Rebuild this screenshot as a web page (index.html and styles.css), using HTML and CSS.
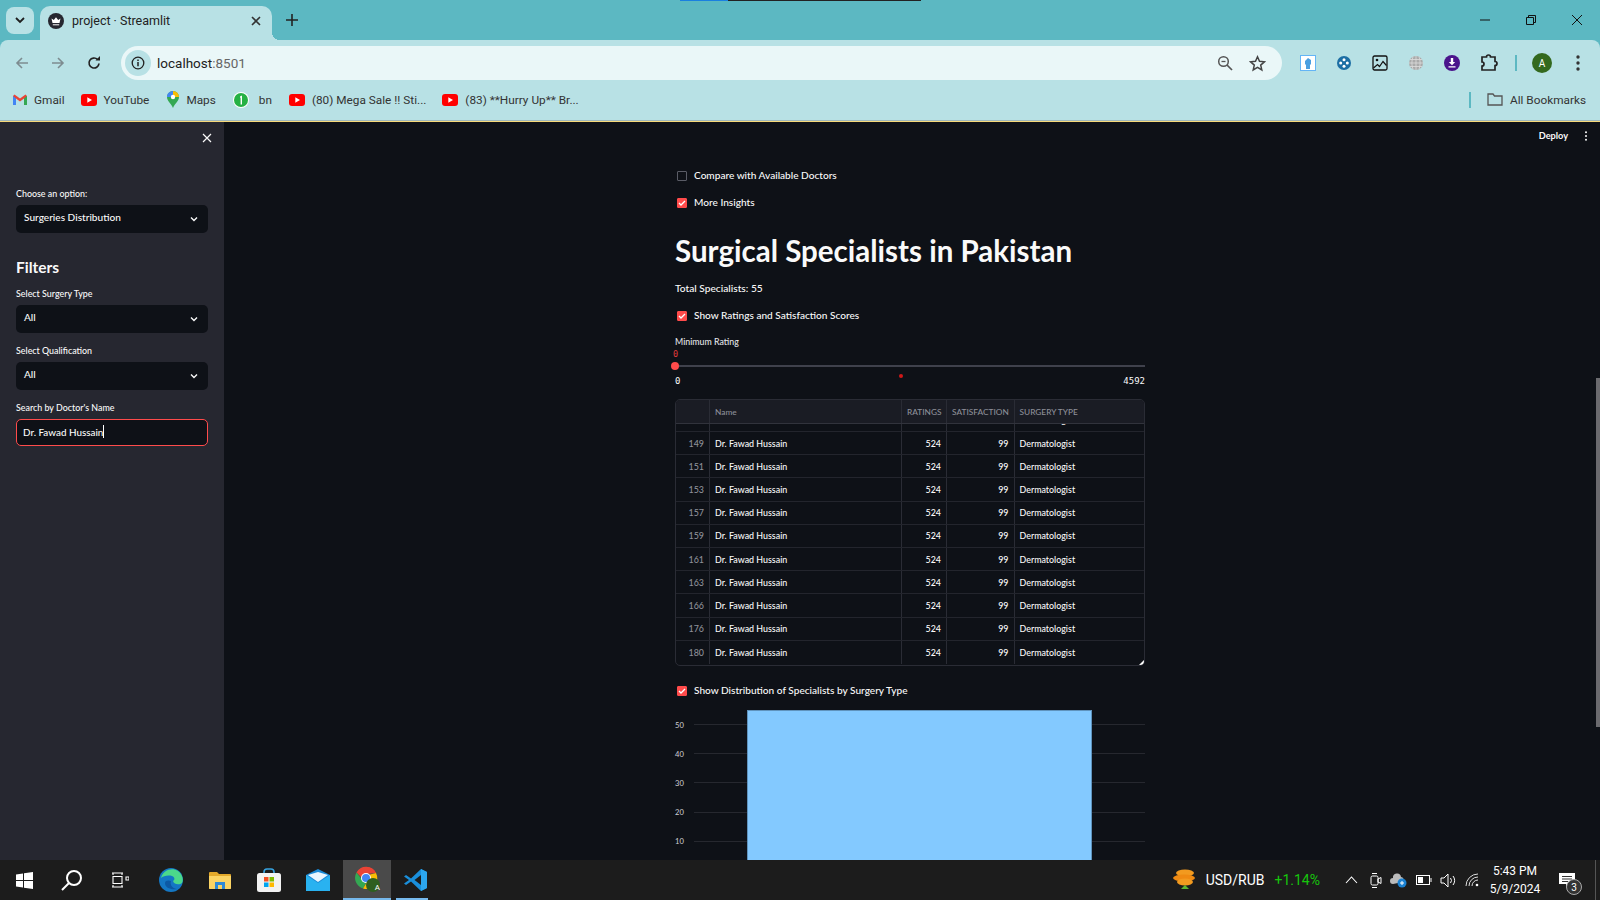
FILE: index.html
```html
<!DOCTYPE html>
<html>
<head>
	<title>project · Streamlit</title>
	<meta charset="utf-8">
	<link rel="stylesheet" href="styles.css">
</head>
<body>

	<div class="browser">
		<div class="tabstrip">
			<div class="tabsearch">
				<svg width="12" height="12" viewBox="0 0 12 12"><path d="M2 4l4 4 4-4" fill="none" stroke="#1f1f1f" stroke-width="1.8"/></svg>
			</div>
			<div class="tab">
				<svg class="favicon" width="16" height="16" viewBox="0 0 16 16"><circle cx="8" cy="8" r="8" fill="#262730"/><path d="M3.5 5.5l2.3 1.6L8 4.2l2.2 2.900 2.300-1.600-1 4.500h-7z" fill="#fff"/><path d="M4.800 11.300h6.400v1h-6.400z" fill="#fff"/></svg>
				<span class="tab_title">project · Streamlit</span>
				<svg class="tab_close" width="10" height="10" viewBox="0 0 10 10"><path d="M1 1l8 8M9 1l-8 8" stroke="#333" stroke-width="1.6"/></svg>
			</div>
			<svg class="newtab" width="12" height="12" viewBox="0 0 12 12"><path d="M6 0v12M0 6h12" stroke="#222" stroke-width="1.6"/></svg>
			<div class="wincontrols">
				<svg width="12" height="12" viewBox="0 0 12 12"><path d="M1 6h10" stroke="#111" stroke-width="1"/></svg>
				<svg width="12" height="12" viewBox="0 0 12 12"><path d="M1.5 3.5h7v7h-7zM3.5 3.5v-2h7v7h-2" fill="none" stroke="#111" stroke-width="1"/></svg>
				<svg width="12" height="12" viewBox="0 0 12 12"><path d="M1 1l10 10M11 1L1 11" stroke="#111" stroke-width="1"/></svg>
			</div>
		</div>

		<div class="toolbar">
			<div class="navbuttons">
				<svg width="16" height="16" viewBox="0 0 16 16"><path d="M14 8H3M8 3L3 8l5 5" fill="none" stroke="#7d8c90" stroke-width="1.6"/></svg>
				<svg width="16" height="16" viewBox="0 0 16 16"><path d="M2 8h11M8 3l5 5-5 5" fill="none" stroke="#7d8c90" stroke-width="1.6"/></svg>
				<svg width="16" height="16" viewBox="0 0 16 16"><path d="M13 8.500A5 5 0 1 1 11.500 4.400" fill="none" stroke="#222" stroke-width="1.7"/><path d="M9.500 5.500H14V1z" fill="#222"/></svg>
			</div>
			<div class="omnibox">
				<div class="siteinfo">
					<svg width="14" height="14" viewBox="0 0 14 14"><circle cx="7" cy="7" r="5.800" fill="none" stroke="#222" stroke-width="1.300"/><path d="M7 6v4.300M7 3.500v1.500" stroke="#222" stroke-width="1.500"/></svg>
				</div>
				<span class="url">localhost<span class="url_port">:8501</span></span>
				<svg class="omni_zoom" width="16" height="16" viewBox="0 0 16 16"><circle cx="6.500" cy="6.500" r="4.800" fill="none" stroke="#555" stroke-width="1.500"/><path d="M10 10l5 5" stroke="#555" stroke-width="1.700"/><path d="M4.500 6.500h4" stroke="#555" stroke-width="1.300"/></svg>
				<svg class="omni_star" width="17" height="17" viewBox="0 0 17 17"><path d="M8.500 1.800l2 4.500 4.900.5-3.700 3.300 1.100 4.800-4.300-2.500-4.300 2.500 1.100-4.800L1.600 6.800l4.900-.5z" fill="none" stroke="#444" stroke-width="1.500"/></svg>
			</div>
			<div class="extensions">
				<svg width="16" height="16" viewBox="0 0 16 16"><rect x=".5" y=".5" width="15" height="15" fill="#fff" stroke="#64b5f6"/><path d="M5 6l3-3 3 2v4l-1 1v4H6v-4L5 9z" fill="#4a9fe0"/></svg>
				<svg width="16" height="16" viewBox="0 0 16 16"><circle cx="8" cy="8" r="7" fill="#1c6ea4"/><circle cx="8" cy="4.700" r="1.500" fill="#fff"/><circle cx="8" cy="11.300" r="1.500" fill="#fff"/><circle cx="4.700" cy="8" r="1.500" fill="#fff"/><circle cx="11.300" cy="8" r="1.500" fill="#fff"/></svg>
				<svg width="16" height="16" viewBox="0 0 16 16"><rect x="1" y="1" width="14" height="14" rx="1.500" fill="none" stroke="#111" stroke-width="1.300"/><circle cx="5" cy="5" r="1.300" fill="#111"/><path d="M1.500 13l4-3.500 2 2 3.500-5 3.500 4" fill="none" stroke="#111" stroke-width="1.200"/></svg>
				<svg width="16" height="16" viewBox="0 0 16 16"><circle cx="8" cy="8" r="7" fill="#aaa"/><path d="M1 8h14M8 1v14M2 4.500h12M2 11.500h12M5 1.700c-1.500 4-1.500 8.600 0 12.600M11 1.700c1.500 4 1.500 8.600 0 12.600" fill="none" stroke="#ddd" stroke-width=".8"/></svg>
				<svg width="16" height="16" viewBox="0 0 16 16"><circle cx="8" cy="8" r="8" fill="#4a148c"/><path d="M6.800 3h2.400v4h2L8 10.300 4.800 7h2zM4.500 11.300h7v1.200h-7z" fill="#fff"/></svg>
				<svg width="18" height="18" viewBox="0 0 18 18"><path d="M2 3h4.500a2 2 0 0 1 4 0H15v4.500a2 2 0 0 1 0 4V16H2v-4a2 2 0 0 0 0-4z" fill="none" stroke="#222" stroke-width="1.700"/></svg>
				<div class="toolbar_sep"></div>
				<div class="avatar">A</div>
				<svg class="chrome_menu" width="4" height="16" viewBox="0 0 4 16"><circle cx="2" cy="2" r="1.700" fill="#333"/><circle cx="2" cy="8" r="1.700" fill="#333"/><circle cx="2" cy="14" r="1.700" fill="#333"/></svg>
			</div>
		</div>

		<div class="bookmarks">
			<span class="bookmark"><svg width="14" height="11" viewBox="0 0 14 11"><path d="M0 2v9h3V4.500L7 7.500l4-3V11h3V2L12.500 .5 7 4.500 1.500 .5z" fill="#ea4335"/><path d="M0 2v9h3V4.500z" fill="#4285f4"/><path d="M11 4.500V11h3V2z" fill="#34a853"/></svg>Gmail</span>
			<span class="bookmark"><svg width="16" height="12" viewBox="0 0 16 12"><rect width="16" height="12" rx="3" fill="#f00"/><path d="M6.300 3.300L11 6l-4.700 2.700z" fill="#fff"/></svg>YouTube</span>
			<span class="bookmark bookmark_maps"><svg width="12" height="17" viewBox="0 0 12 17"><path d="M6 0a6 6 0 0 1 6 6c0 4-4 6-6 11C4 12 0 10 0 6a6 6 0 0 1 6-6z" fill="#34a853"/><path d="M1 2.500A6 6 0 0 1 6 0v6H0a6 6 0 0 1 1-3.500z" fill="#4285f4"/><path d="M6 0a6 6 0 0 1 6 6H6z" fill="#fbbc04"/><circle cx="6" cy="6" r="2.200" fill="#fff"/></svg>Maps</span>
			<span class="bookmark bookmark_wa"><svg width="16" height="16" viewBox="0 0 16 16"><circle cx="8" cy="8" r="8" fill="#fff"/><circle cx="8" cy="8" r="7" fill="#25b144"/><path d="M7 4.500l2-1v9H7.600V5.500L7 5.800z" fill="#fff"/></svg>bn</span>
			<span class="bookmark"><svg width="16" height="12" viewBox="0 0 16 12"><rect width="16" height="12" rx="3" fill="#f00"/><path d="M6.300 3.300L11 6l-4.700 2.700z" fill="#fff"/></svg>(80) Mega Sale !! Sti...</span>
			<span class="bookmark"><svg width="16" height="12" viewBox="0 0 16 12"><rect width="16" height="12" rx="3" fill="#f00"/><path d="M6.300 3.300L11 6l-4.700 2.700z" fill="#fff"/></svg>(83) **Hurry Up** Br...</span>
			<div class="bookmarks_right">
				<div class="toolbar_sep"></div>
				<span class="bookmark"><svg width="16" height="13" viewBox="0 0 16 13"><path d="M1 12V1h5l1.500 2H15v9z" fill="none" stroke="#555" stroke-width="1.300"/></svg>All Bookmarks</span>
			</div>
		</div>
	</div>

	<div class="app">
		<div class="sidebar">
			<div class="sidebar_close">
				<svg width="10" height="10" viewBox="0 0 10 10"><path d="M1 1l8 8M9 1l-8 8" stroke="#fafafa" stroke-width="1.200"/></svg>
			</div>
			<label class="widget_label">Choose an option:</label>
			<div class="selectbox"><span>Surgeries Distribution</span><svg width="10" height="10" viewBox="0 0 10 10"><path d="M2 3.500l3 3 3-3" fill="none" stroke="#fafafa" stroke-width="1.400"/></svg></div>
			<h2 class="filters">Filters</h2>
			<label class="widget_label">Select Surgery Type</label>
			<div class="selectbox"><span>All</span><svg width="10" height="10" viewBox="0 0 10 10"><path d="M2 3.500l3 3 3-3" fill="none" stroke="#fafafa" stroke-width="1.400"/></svg></div>
			<label class="widget_label">Select Qualification</label>
			<div class="selectbox"><span>All</span><svg width="10" height="10" viewBox="0 0 10 10"><path d="M2 3.500l3 3 3-3" fill="none" stroke="#fafafa" stroke-width="1.400"/></svg></div>
			<label class="widget_label">Search by Doctor's Name</label>
			<div class="textinput"><span>Dr. Fawad Hussain</span><span class="caret"></span></div>
		</div>

		<div class="main">
			<div class="app_header">
				<span>Deploy</span>
				<svg width="4" height="10" viewBox="0 0 4 10"><circle cx="2" cy="1.200" r="1" fill="#fafafa"/><circle cx="2" cy="5" r="1" fill="#fafafa"/><circle cx="2" cy="8.800" r="1" fill="#fafafa"/></svg>
			</div>
			<div class="block">
				<div class="check"><span class="box"></span>Compare with Available Doctors</div>
				<div class="check"><span class="box box_on"><svg width="8" height="8" viewBox="0 0 8 8"><path d="M1 4l2 2 4-4" fill="none" stroke="#fff" stroke-width="1.300"/></svg></span>More Insights</div>
				<h1 class="title">Surgical Specialists in Pakistan</h1>
				<p class="total">Total Specialists: 55</p>
				<div class="check"><span class="box box_on"><svg width="8" height="8" viewBox="0 0 8 8"><path d="M1 4l2 2 4-4" fill="none" stroke="#fff" stroke-width="1.300"/></svg></span>Show Ratings and Satisfaction Scores</div>

				<div class="slider">
					<label class="slider_label">Minimum Rating</label>
					<div class="slider_value">0</div>
					<div class="slider_track"><span class="slider_thumb"></span></div>
					<div class="slider_ends"><span>0</span><span class="slider_dot"></span><span>4592</span></div>
				</div>

				<div class="datatable">
					<div class="dt_row dt_head">
						<div></div><div>Name</div><div>RATINGS</div><div>SATISFACTION</div><div>SURGERY TYPE</div>
					</div>
					<div class="dt_cut"><div></div><div></div><div></div><div></div><div><span class="dt_clipped">Dermatologist</span></div></div>
					<div class="dt_row"><div class="idx">149</div><div>Dr. Fawad Hussain</div><div class="num">524</div><div class="num">99</div><div>Dermatologist</div></div>
					<div class="dt_row"><div class="idx">151</div><div>Dr. Fawad Hussain</div><div class="num">524</div><div class="num">99</div><div>Dermatologist</div></div>
					<div class="dt_row"><div class="idx">153</div><div>Dr. Fawad Hussain</div><div class="num">524</div><div class="num">99</div><div>Dermatologist</div></div>
					<div class="dt_row"><div class="idx">157</div><div>Dr. Fawad Hussain</div><div class="num">524</div><div class="num">99</div><div>Dermatologist</div></div>
					<div class="dt_row"><div class="idx">159</div><div>Dr. Fawad Hussain</div><div class="num">524</div><div class="num">99</div><div>Dermatologist</div></div>
					<div class="dt_row"><div class="idx">161</div><div>Dr. Fawad Hussain</div><div class="num">524</div><div class="num">99</div><div>Dermatologist</div></div>
					<div class="dt_row"><div class="idx">163</div><div>Dr. Fawad Hussain</div><div class="num">524</div><div class="num">99</div><div>Dermatologist</div></div>
					<div class="dt_row"><div class="idx">166</div><div>Dr. Fawad Hussain</div><div class="num">524</div><div class="num">99</div><div>Dermatologist</div></div>
					<div class="dt_row"><div class="idx">176</div><div>Dr. Fawad Hussain</div><div class="num">524</div><div class="num">99</div><div>Dermatologist</div></div>
					<div class="dt_row"><div class="idx">180</div><div>Dr. Fawad Hussain</div><div class="num">524</div><div class="num">99</div><div>Dermatologist</div></div>
					<span class="dt_resize"></span>
				</div>

				<div class="check chart_check"><span class="box box_on"><svg width="8" height="8" viewBox="0 0 8 8"><path d="M1 4l2 2 4-4" fill="none" stroke="#fff" stroke-width="1.300"/></svg></span>Show Distribution of Specialists by Surgery Type</div>

				<div class="chart">
					<div class="chart_bar"></div>
					<div class="chart_line"><span>50</span><i></i></div>
					<div class="chart_line"><span>40</span><i></i></div>
					<div class="chart_line"><span>30</span><i></i></div>
					<div class="chart_line"><span>20</span><i></i></div>
					<div class="chart_line"><span>10</span><i></i></div>
				</div>
			</div>
			<div class="scrollbar"><div class="scrollbar_thumb"></div></div>
		</div>
	</div>

	<div class="taskbar">
		<div class="task_left">
			<div class="task_icon"><svg width="17" height="17" viewBox="0 0 17 17"><path d="M0 2.500l7-1V8H0zM8 1.300L17 0v8H8zM0 9h7v6.500l-7-1zM8 9h9v8l-9-1.300z" fill="#fff"/></svg></div>
			<div class="task_icon"><svg width="22" height="22" viewBox="0 0 22 22"><circle cx="13" cy="9" r="7" fill="none" stroke="#fff" stroke-width="2"/><path d="M8 14l-7 7" stroke="#fff" stroke-width="2"/></svg></div>
			<div class="task_icon"><svg width="18" height="16" viewBox="0 0 18 16"><path d="M1 1h11M1 15h11M2 4.500h9v7H2zM15 5h3v3h-3zM2 1v2M11 1v2M2 13v2M11 13v2" fill="none" stroke="#fff" stroke-width="1.100"/></svg></div>
			<div class="task_pinned">
				<div class="task_icon"><svg width="24" height="24" viewBox="0 0 24 24"><circle cx="12" cy="12" r="12" fill="#1477c4"/><path d="M2 10C4 2 13-1 19 3c4 3 6 8 4 12-2 2-8 2-9-2 2-1 2-4-1-5-4-1-9 0-11 2z" fill="#4bd88b"/><path d="M6 15c0 5 6 7 12 6-6-1-7-5-6-8-2-1-6-1-6 2z" fill="#0c59a4"/></svg></div>
				<div class="task_icon"><svg width="22" height="18" viewBox="0 0 22 18"><path d="M0 2a1 1 0 0 1 1-1h7l2 2h11a1 1 0 0 1 1 1v13a1 1 0 0 1-1 1H1a1 1 0 0 1-1-1z" fill="#e3a92b"/><path d="M0 5h22v12a1 1 0 0 1-1 1H1a1 1 0 0 1-1-1z" fill="#fbd464"/><path d="M6 18v-7h10v7h-3v-4H9v4z" fill="#2f8ad6"/></svg></div>
				<div class="task_icon"><svg width="24" height="24" viewBox="0 0 24 24"><path d="M7 7V4a3 3 0 0 1 3-3h4a3 3 0 0 1 3 3v3" fill="none" stroke="#36a3e0" stroke-width="1.600"/><rect y="5" width="24" height="19" rx="2.500" fill="#f2f2f2"/><rect x="7" y="9" width="4.500" height="4.500" fill="#f25022"/><rect x="12.500" y="9" width="4.500" height="4.500" fill="#7fba00"/><rect x="7" y="14.500" width="4.500" height="4.500" fill="#00a4ef"/><rect x="12.500" y="14.500" width="4.500" height="4.500" fill="#ffb900"/></svg></div>
				<div class="task_icon"><svg width="24" height="22" viewBox="0 0 24 22"><path d="M0 6l12-6 12 6v16H0z" fill="#1a8ad6"/><path d="M0 6l12 8 12-8v16H0z" fill="#29b2f0"/><path d="M2 6l10 7 10-7-10-3z" fill="#e8f6fe"/></svg></div>
				<div class="task_icon task_active"><svg width="26" height="26" viewBox="0 0 26 26"><path d="M12 1a11 11 0 0 1 10 6H12z" fill="#ea4335"/><path d="M2.500 6.500A11 11 0 0 1 22 7l-10 1-5 3z" fill="#ea4335"/><path d="M2.500 6.500A11 11 0 0 0 9 22.500l4-7-5-2z" fill="#34a853"/><path d="M22 7a11 11 0 0 1-13 15.500l5-8 2-6z" fill="#fbbc04"/><circle cx="12" cy="12" r="5" fill="#fff"/><circle cx="12" cy="12" r="4" fill="#4285f4"/><circle cx="19" cy="19" r="7" fill="#2e5f1f"/></svg><span class="chrome_a">A</span></div>
				<div class="task_icon task_open"><svg width="24" height="24" viewBox="0 0 24 24"><path d="M17 1l6 3v16l-6 3-10-9.500L2 17 0 15.500 5 12 0 8.500 2 7l5 3.500z" fill="#1a8fdb"/><path d="M17 7l-6.500 5 6.500 5z" fill="#1c1c1c"/><path d="M17 1l6 3v16l-6 3z" fill="#2ca6ee"/></svg></div>
			</div>
		</div>
		<div class="task_right">
			<div class="ticker">
				<svg width="24" height="22" viewBox="0 0 24 22"><ellipse cx="12" cy="4" rx="9" ry="3.500" fill="#f29a1f"/><ellipse cx="11" cy="9" rx="11" ry="3.500" fill="#ef8a12"/><ellipse cx="12" cy="13" rx="8" ry="3.500" fill="#f29a1f"/><path d="M12 16l4 4H8z" fill="#5cb531"/></svg>
				<span class="ticker_name">USD/RUB</span>
				<span class="ticker_change">+1.14%</span>
			</div>
			<div class="tray">
				<svg class="tray_chevron" width="13" height="8" viewBox="0 0 13 8"><path d="M1 7l5.500-6L12 7" fill="none" stroke="#fff" stroke-width="1.100"/></svg>
				<svg width="12" height="17" viewBox="0 0 12 17"><rect x="1" y="4" width="7" height="9" rx="1.500" fill="none" stroke="#fff"/><path d="M8 7l3-1.500v6L8 10zM2 1.500h5M2 15.500h5" fill="none" stroke="#fff"/></svg>
				<svg width="18" height="16" viewBox="0 0 18 16"><path d="M3 12a3 3 0 0 1 0-6 4 4 0 0 1 8-1 3 3 0 0 1 2 5z" fill="#bbb"/><circle cx="12" cy="11" r="4.500" fill="#1b82d2"/><path d="M10 11h4M12 9v4" stroke="#fff"/></svg>
				<svg width="16" height="10" viewBox="0 0 16 10"><rect x=".5" y=".5" width="13" height="9" fill="none" stroke="#fff"/><rect x="2" y="2" width="5" height="6" fill="#fff"/><path d="M15 3v4" stroke="#fff"/></svg>
				<svg width="17" height="15" viewBox="0 0 17 15"><path d="M1 5h3l4-4v13l-4-4H1z" fill="none" stroke="#fff"/><path d="M10.500 5a4 4 0 0 1 0 5M13 3a7 7 0 0 1 0 9" fill="none" stroke="#fff"/></svg>
				<svg width="14" height="14" viewBox="0 0 14 14"><path d="M1 13A12 12 0 0 1 13 1M4 13a9 9 0 0 1 9-9M7 13a6 6 0 0 1 6-6" fill="none" stroke="#ddd"/><circle cx="12" cy="12" r="1.300" fill="#fff"/></svg>
			</div>
			<div class="clock"><span>5:43 PM</span><span>5/9/2024</span></div>
			<div class="notify">
				<svg width="16" height="15" viewBox="0 0 16 15"><path d="M0 0h16v11h-6l-3 4v-4H0z" fill="#fff"/><path d="M3 3.500h10M3 6h10M3 8.500h6" stroke="#333"/></svg>
				<span class="notify_count">3</span>
			</div>
			<div class="show_desktop"></div>
		</div>
	</div>

</body>
</html>
```

FILE: styles.css
```css
* {
	box-sizing: border-box;
	margin: 0px;
}
html, body {
	height: 900px;
	overflow: hidden;
}
body {
	background: #0e1117;
	font-family: "Lato", sans-serif;
	display: flex;
	flex-direction: column;
}

/* browser chrome */
.browser {
	height: 122px;
	flex-shrink: 0;
	background: #5cb8c2;
	border-bottom: 1px solid #f6d97a;
	font-family: "Roboto", sans-serif;
}
.tabstrip {
	height: 40px;
	display: flex;
	align-items: center;
	padding-left: 6px;
	position: relative;
}
.tabstrip:before {
	content: "";
	position: absolute;
	top: 0;
	left: 680px;
	width: 241px;
	height: 1px;
	background: linear-gradient(to right, #1a7fe0 48px, #222 48px);
}
.tabsearch {
	width: 28px;
	height: 27px;
	background: #b8e1e5;
	border-radius: 8px;
	display: flex;
	align-items: center;
	justify-content: center;
}
.tab {
	width: 232px;
	height: 34px;
	margin-left: 6px;
	margin-top: 6px;
	background: #b8e1e5;
	border-radius: 10px 10px 0 0;
	display: flex;
	align-items: center;
	padding: 0 11px 5px 8px;
	font-size: 12.500px;
	color: #222;
	position: relative;
}
.tab:after {
	content: "";
	position: absolute;
	right: -8px;
	bottom: 0;
	width: 8px;
	height: 8px;
	background: radial-gradient(circle at 100% 0, transparent 8px, #b8e1e5 8px);
}
.tab_title {
	flex: 1;
	margin-left: 8px;
}
.newtab {
	margin-left: 14px;
}
.wincontrols {
	margin-left: auto;
	display: flex;
	gap: 34px;
	padding-right: 17px;
}
.toolbar {
	height: 40px;
	background: #b8e1e5;
	border-radius: 8px 8px 0 0;
	display: flex;
	align-items: center;
	padding: 6px 12px 0 14px;
}
.navbuttons {
	display: flex;
	gap: 20px;
	width: 107px;
}
.omnibox {
	width: 1161px;
	height: 34px;
	background: #eaf7f8;
	border-radius: 17px;
	display: flex;
	align-items: center;
	padding: 0 16px 0 4px;
}
.siteinfo {
	width: 26px;
	height: 26px;
	border-radius: 13px;
	background: #b8e1e5;
	display: flex;
	align-items: center;
	justify-content: center;
}
.url {
	margin-left: 6px;
	font-size: 13.500px;
	color: #222;
}
.url_port {
	color: #666;
}
.omni_zoom {
	margin-left: auto;
}
.omni_star {
	margin-left: 16px;
}
.extensions {
	display: flex;
	align-items: center;
	margin-left: 18px;
	gap: 20px;
	flex: 1;
}
.toolbar_sep {
	width: 1px;
	height: 16px;
	border-left: 2px solid #5cb8c2;
}
.extensions .toolbar_sep {
	margin-left: -3px;
	margin-right: -5px;
}
.chrome_menu {
	margin-left: 4px;
}
.avatar {
	width: 20px;
	height: 20px;
	border-radius: 10px;
	background: #33691e;
	color: #fff;
	font-size: 10px;
	display: flex;
	align-items: center;
	justify-content: center;
}
.bookmarks {
	height: 41px;
	background: #b8e1e5;
	border-bottom: 1px solid #9fb8ba;
	display: flex;
	align-items: center;
	padding: 0 14px 1px 13px;
	gap: 16px;
	font-size: 11.800px;
	color: #333;
}
.bookmark {
	display: flex;
	align-items: center;
	gap: 7px;
	white-space: nowrap;
}
.bookmark_maps {
	margin-left: 2px;
}
.bookmark_wa {
	gap: 10px;
	margin-left: 1px;
	margin-right: 1px;
}
.bookmarks_right {
	margin-left: auto;
	display: flex;
	align-items: center;
	gap: 16px;
}

/* streamlit app */
.app {
	flex: 1;
	display: flex;
	min-height: 0;
}
.sidebar {
	width: 224px;
	flex-shrink: 0;
	background: #262730;
	padding: 0 16px;
	color: #fafafa;
}
.sidebar_close {
	height: 65px;
	padding-top: 11px;
	display: flex;
	justify-content: flex-end;
}
.sidebar_close svg {
	margin-right: -4px;
}
.widget_label {
	display: block;
	font-size: 8.900px;
	font-weight: 500;
	line-height: 14px;
	margin-bottom: 4px;
}
.selectbox {
	height: 28px;
	background: #0e1117;
	border-radius: 5px;
	display: flex;
	align-items: center;
	justify-content: space-between;
	padding: 0 9px 5px 8px;
	font-size: 10.100px;
	font-weight: 500;
	margin-bottom: 11px;
}
.selectbox svg {
	margin-top: 5px;
}
.filters {
	font-size: 15.500px;
	line-height: 20px;
	margin-top: 24px;
	margin-bottom: 10px;
	font-weight: 700;
}
.textinput {
	height: 27px;
	border: 1px solid #ff4b4b;
	border-radius: 5px;
	background: #0e1117;
	display: flex;
	align-items: center;
	padding: 0 6px 2px;
	font-size: 9.900px;
	font-weight: 500;
}
.caret {
	width: 1px;
	height: 13px;
	background: #fff;
}
.main {
	flex: 1;
	position: relative;
	color: #fafafa;
	min-width: 0;
	overflow: hidden;
}
.app_header {
	position: absolute;
	top: 8px;
	right: 12px;
	display: flex;
	align-items: center;
	gap: 16px;
	font-size: 9.200px;
	font-weight: 700;
}
.block {
	width: 470px;
	margin-left: 451px;
	padding-top: 46px;
}
.check {
	display: flex;
	align-items: center;
	height: 14px;
	font-size: 10.100px;
	font-weight: 500;
	line-height: 12px;
	margin-bottom: 13px;
	margin-left: 2px;
}
.box {
	width: 10px;
	height: 10px;
	border: 1px solid #5a5c66;
	border-radius: 1px;
	margin-right: 7px;
	margin-top: 1px;
	display: flex;
	align-items: center;
	justify-content: center;
}
.box_on {
	background: #ff4b4b;
	border-color: #ff4b4b;
}
.title {
	font-size: 29.500px;
	line-height: 36px;
	font-weight: 700;
	margin-top: 24px;
}
.total {
	font-size: 10.200px;
	font-weight: 500;
	line-height: 14px;
	margin-top: 12px;
	margin-bottom: 13px;
}
.slider {
	height: 55px;
	margin-top: 14px;
}
.slider_label {
	display: block;
	font-size: 8.800px;
	font-weight: 500;
	line-height: 12px;
	color: #e4e4e8;
}
.slider_value {
	font-family: "DejaVu Sans Mono", monospace;
	font-size: 8.500px;
	line-height: 10px;
	color: #e03c3c;
	margin-top: 1px;
	margin-left: -2px;
}
.slider_track {
	height: 2px;
	margin-top: 6px;
	background: #3f414c;
	position: relative;
}
.slider_thumb {
	position: absolute;
	left: -4px;
	top: -3px;
	width: 8px;
	height: 8px;
	border-radius: 4px;
	background: #ff4b4b;
}
.slider_ends {
	display: flex;
	justify-content: space-between;
	align-items: center;
	font-family: "DejaVu Sans Mono", monospace;
	font-size: 9px;
	line-height: 12px;
	margin-top: 8px;
}
.slider_dot {
	width: 4px;
	height: 4px;
	border-radius: 2px;
	background: #d01818;
	margin-top: -11px;
	margin-left: -2px;
}
.datatable {
	position: relative;
	height: 267px;
	margin-top: 8px;
	border: 1px solid #2a2c35;
	border-radius: 5px;
	overflow: hidden;
	font-size: 8.900px;
	font-weight: 500;
}
.dt_row, .dt_cut {
	display: grid;
	grid-template-columns: 34px 192px 45px 67.500px 1fr;
	height: 23.200px;
	border-bottom: 1px solid #23252d;
}
.dt_row:last-of-type {
	border-bottom: 0;
}
.dt_row div {
	display: flex;
	align-items: center;
	padding: 0 5px;
	border-right: 1px solid #2a2c35;
}
.dt_row div:last-child, .dt_cut div:last-child {
	border-right: 0;
}
.dt_cut {
	height: 8px;
}
.dt_cut div {
	border-right: 1px solid #2a2c35;
	overflow: hidden;
	padding-left: 5px;
}
.dt_clipped {
	display: block;
	line-height: 12px;
	margin-top: -10px;
}
.dt_head {
	height: 24px;
	background: #1a1c24;
	color: #8d8f98;
	border-bottom: 1px solid #31333c;
	white-space: nowrap;
	font-size: 8.300px;
}
.dt_row .idx {
	justify-content: flex-end;
	color: #8d8f98;
}
.dt_row .num {
	justify-content: flex-end;
}
.dt_resize {
	position: absolute;
	right: 0;
	bottom: 0;
	width: 5px;
	height: 5px;
	background: #fff;
	clip-path: polygon(100% 0, 100% 100%, 0 100%);
}
.chart_check {
	margin-top: 17px;
	margin-bottom: 0;
}
.chart {
	position: relative;
	margin-top: 13px;
	height: 170px;
}
.chart_bar {
	position: absolute;
	top: 0;
	left: 72px;
	width: 345px;
	height: 170px;
	background: #83c9ff;
	border: 1px solid #5f93bd;
	border-bottom: 0;
}
.chart_line {
	display: flex;
	align-items: center;
	height: 29.200px;
	font-size: 7.600px;
	color: #d0d0d5;
}
.chart_line span {
	width: 19px;
}
.chart_line i {
	flex: 1;
	height: 1px;
	background: #26282f;
}
.scrollbar {
	position: absolute;
	top: 0;
	right: 0;
	width: 4px;
	height: 100%;
}
.scrollbar_thumb {
	margin-top: 256px;
	height: 349px;
	background: #6a6a6e;
}

/* windows taskbar */
.taskbar {
	height: 40px;
	flex-shrink: 0;
	background: #1c1c1c;
	color: #fff;
	font-family: "Roboto", sans-serif;
	display: flex;
	align-items: center;
	justify-content: space-between;
	position: relative;
	z-index: 1;
}
.task_left {
	display: flex;
	height: 100%;
}
.task_pinned {
	display: flex;
	gap: 1px;
	margin-left: 3px;
}
.task_icon {
	width: 48px;
	height: 100%;
	display: flex;
	align-items: center;
	justify-content: center;
	position: relative;
}
.task_active {
	background: #4a4a4a;
	border-bottom: 2px solid #76b9ed;
}
.task_open:after {
	content: "";
	position: absolute;
	left: 4px;
	right: 12px;
	bottom: 0;
	height: 2px;
	background: #76b9ed;
}
.chrome_a {
	position: absolute;
	right: 11px;
	bottom: 6px;
	font-size: 8px;
}
.task_right {
	display: flex;
	align-items: center;
	height: 100%;
	padding-right: 4px;
}
.ticker {
	display: flex;
	align-items: center;
	font-size: 14px;
}
.ticker_name {
	margin-left: 9px;
}
.ticker_change {
	margin-left: 10px;
	color: #16c60c;
}
.tray {
	display: flex;
	align-items: center;
	gap: 8px;
	margin-left: 25px;
}
.tray_chevron {
	margin-right: 4px;
}
.clock {
	display: flex;
	flex-direction: column;
	align-items: center;
	width: 62px;
	margin-left: 5px;
	font-size: 12px;
	line-height: 18px;
}
.notify {
	width: 46px;
	height: 100%;
	padding-right: 4px;
	display: flex;
	align-items: center;
	justify-content: center;
	position: relative;
}
.notify_count {
	position: absolute;
	right: 10px;
	bottom: 5px;
	width: 16px;
	height: 16px;
	border-radius: 8px;
	background: #333;
	border: 1px solid #aaa;
	font-size: 10px;
	display: flex;
	align-items: center;
	justify-content: center;
}
.show_desktop {
	width: 1px;
	height: 100%;
	margin-left: 3px;
	background: #555;
}
```
